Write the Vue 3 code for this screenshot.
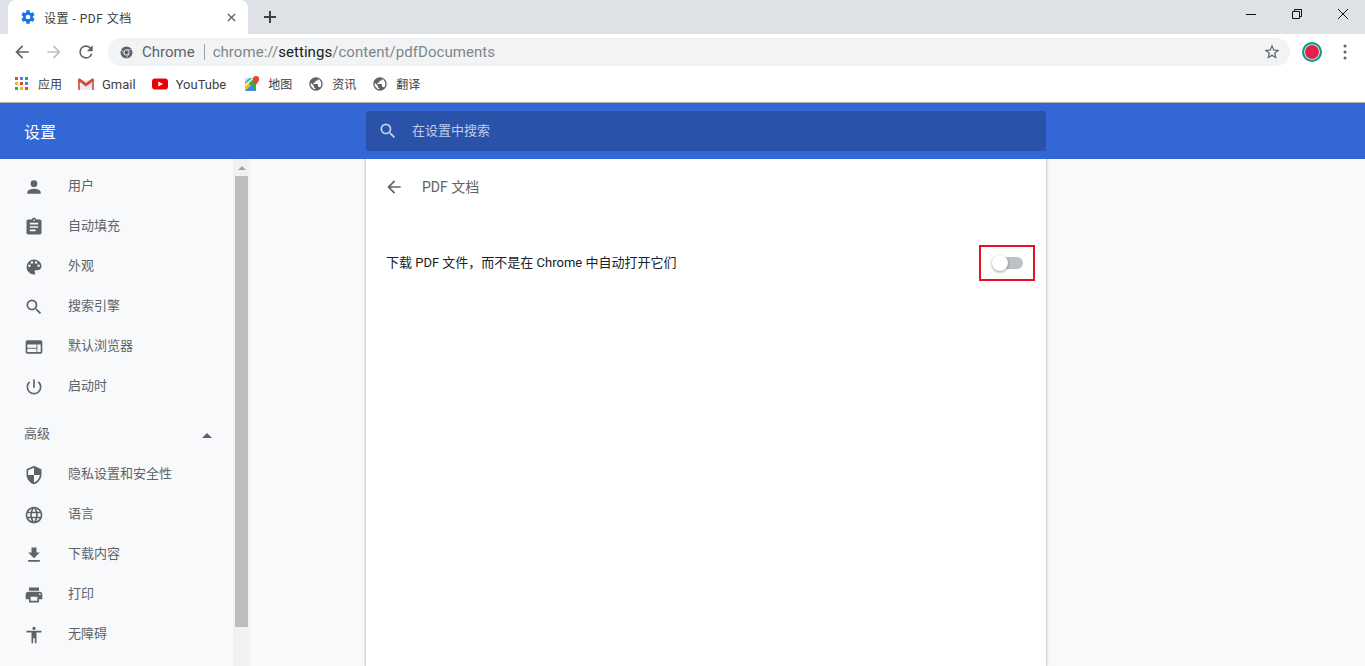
<script setup>
const searchPath = 'M15.5 14h-.79l-.28-.27A6.47 6.47 0 0 0 16 9.5 6.5 6.5 0 1 0 9.5 16c1.61 0 3.09-.59 4.23-1.57l.27.28v.79l5 4.99L20.49 19l-4.99-5zm-6 0C7.01 14 5 11.99 5 9.5S7.01 5 9.5 5 14 7.01 14 9.5 11.99 14 9.5 14z'

const bookmarks = [
  { id: 'apps', label: '应用' },
  { id: 'gmail', label: 'Gmail', latin: true },
  { id: 'youtube', label: 'YouTube', latin: true },
  { id: 'maps', label: '地图' },
  { id: 'globe', label: '资讯' },
  { id: 'globe', label: '翻译' }
]

const basicMenu = [
  { label: '用户', d: 'M12 12a4 4 0 1 0 0-8 4 4 0 0 0 0 8zm0 2c-2.67 0-8 1.34-8 4v2h16v-2c0-2.66-5.33-4-8-4z' },
  { label: '自动填充', d: 'M19 3h-4.18C14.4 1.84 13.3 1 12 1s-2.4.84-2.82 2H5a2 2 0 0 0-2 2v14c0 1.1.9 2 2 2h14a2 2 0 0 0 2-2V5a2 2 0 0 0-2-2zm-7 0a1 1 0 1 1 0 2 1 1 0 0 1 0-2zm2 14H7v-2h7v2zm3-4H7v-2h10v2zm0-4H7V7h10v2z' },
  { label: '外观', d: 'M12 3a9 9 0 0 0 0 18c.83 0 1.5-.67 1.5-1.5 0-.39-.15-.74-.39-1.01-.23-.26-.38-.61-.38-.99 0-.83.67-1.5 1.5-1.5H16c2.76 0 5-2.24 5-5 0-4.42-4.03-8-9-8zm-5.5 9a1.5 1.5 0 1 1 0-3 1.5 1.5 0 0 1 0 3zm3-4a1.5 1.5 0 1 1 0-3 1.5 1.5 0 0 1 0 3zm5 0a1.5 1.5 0 1 1 0-3 1.5 1.5 0 0 1 0 3zm3 4a1.5 1.5 0 1 1 0-3 1.5 1.5 0 0 1 0 3z' },
  { label: '搜索引擎', d: searchPath },
  { label: '默认浏览器', d: 'M20 4H4a2 2 0 0 0-2 2v12c0 1.1.9 2 2 2h16a2 2 0 0 0 2-2V6a2 2 0 0 0-2-2zm-5 14H4v-4h11v4zm0-5H4V9h11v4zm5 5h-4V9h4v9z' },
  { label: '启动时', d: 'M13 3h-2v10h2V3zm4.83 2.17l-1.42 1.42A6.92 6.92 0 0 1 19 12a7 7 0 1 1-11.42-5.41L6.17 5.17A8.93 8.93 0 0 0 3 12a9 9 0 0 0 18 0c0-2.74-1.23-5.18-3.17-6.83z' }
]

const advancedMenu = [
  { label: '隐私设置和安全性', d: 'M12 1L3 5v6c0 5.55 3.84 10.74 9 12 5.16-1.26 9-6.45 9-12V5l-9-4zm0 10.99h7c-.53 4.12-3.28 7.79-7 8.94V12H5V6.3l7-3.11v8.8z' },
  { label: '语言', d: 'M11.99 2C6.47 2 2 6.48 2 12s4.47 10 9.99 10C17.52 22 22 17.52 22 12S17.52 2 11.99 2zm6.93 6h-2.95a15.65 15.65 0 0 0-1.38-3.56A8.03 8.03 0 0 1 18.92 8zM12 4.04c.83 1.2 1.48 2.53 1.91 3.96h-3.82c.43-1.43 1.08-2.76 1.91-3.96zM4.26 14C4.1 13.36 4 12.69 4 12s.1-1.36.26-2h3.38c-.08.66-.14 1.32-.14 2 0 .68.06 1.34.14 2H4.26zm.82 2h2.95c.32 1.25.78 2.45 1.38 3.56A7.987 7.987 0 0 1 5.08 16zm2.95-8H5.08a7.987 7.987 0 0 1 4.33-3.56A15.65 15.65 0 0 0 8.03 8zM12 19.96c-.83-1.2-1.48-2.53-1.91-3.96h3.82c-.43 1.43-1.08 2.76-1.91 3.96zM14.34 14H9.66c-.09-.66-.16-1.32-.16-2 0-.68.07-1.35.16-2h4.68c.09.65.16 1.32.16 2 0 .68-.07 1.34-.16 2zm.25 5.56c.6-1.11 1.06-2.31 1.38-3.56h2.95a8.03 8.03 0 0 1-4.33 3.56zM16.36 14c.08-.66.14-1.32.14-2 0-.68-.06-1.34-.14-2h3.38c.16.64.26 1.31.26 2s-.1 1.36-.26 2h-3.38z' },
  { label: '下载内容', d: 'M19 9h-4V3H9v6H5l7 7 7-7zM5 18v2h14v-2H5z' },
  { label: '打印', d: 'M19 8H5c-1.66 0-3 1.34-3 3v6h4v4h12v-4h4v-6c0-1.66-1.34-3-3-3zm-3 11H8v-5h8v5zm3-7a1 1 0 1 1 0-2 1 1 0 0 1 0 2zm-1-9H6v4h12V3z' },
  { label: '无障碍', d: 'M12 2a2 2 0 1 1 0 4 2 2 0 0 1 0-4zm9 7h-6v13h-2v-6h-2v6H9V9H3V7h18v2z' }
]

// the little seeds on the watermelon avatar
const seeds = [[10, 5.5], [13.2, 6.8], [14.5, 10], [13.2, 13.2], [10, 14.5], [6.8, 13.2], [5.5, 10], [6.8, 6.8]]
</script>

<template>
  <div class="page">
    <div class="tabstrip">
      <div class="tab">
        <svg class="tab-gear" viewBox="0 0 24 24"><path d="M19.43 12.98c.04-.32.07-.64.07-.98s-.03-.66-.07-.98l2.11-1.65c.19-.15.24-.42.12-.64l-2-3.46c-.12-.22-.39-.3-.61-.22l-2.49 1c-.52-.4-1.08-.73-1.69-.98l-.38-2.65A.49.49 0 0 0 14 2h-4c-.25 0-.46.18-.49.42l-.38 2.65c-.61.25-1.17.59-1.69.98l-2.49-1c-.23-.09-.49 0-.61.22l-2 3.46c-.13.22-.07.49.12.64l2.11 1.65c-.04.32-.07.65-.07.98s.03.66.07.98l-2.11 1.65c-.19.15-.24.42-.12.64l2 3.46c.12.22.39.3.61.22l2.49-1c.52.4 1.08.73 1.69.98l.38 2.65c.03.24.24.42.49.42h4c.25 0 .46-.18.49-.42l.38-2.65c.61-.25 1.17-.59 1.69-.98l2.49 1c.23.09.49 0 .61-.22l2-3.46c.12-.22.07-.49-.12-.64l-2.11-1.65zM12 15.5a3.5 3.5 0 1 1 0-7 3.5 3.5 0 0 1 0 7z" fill="#1a73e8" /></svg>
        <span class="tab-title">设置 - PDF 文档</span>
        <svg class="tab-close" viewBox="0 0 10 10"><path d="M1 1l8 8M9 1l-8 8" stroke="#5f6368" stroke-width="1.5" /></svg>
      </div>
      <svg class="new-tab" viewBox="0 0 12 12"><path d="M6 0v12M0 6h12" stroke="#3c4043" stroke-width="2" /></svg>
      <div class="win-controls">
        <svg viewBox="0 0 12 12"><path d="M1 6.5h10" stroke="#111" stroke-width="1" /></svg>
        <svg viewBox="0 0 12 12" fill="none" stroke="#111"><path d="M1.5 3.5h7v7h-7zM3.5 3.5v-2h7v7h-2" /></svg>
        <svg viewBox="0 0 12 12"><path d="M1 1l10 10M11 1L1 11" stroke="#111" stroke-width="1" /></svg>
      </div>
    </div>

    <div class="toolbar">
      <svg class="nav" viewBox="0 0 24 24"><path d="M20 11H7.83l5.59-5.59L12 4l-8 8 8 8 1.41-1.41L7.83 13H20z" fill="#5f6368" /></svg>
      <svg class="nav" viewBox="0 0 24 24"><path d="M4 11h12.17l-5.59-5.59L12 4l8 8-8 8-1.41-1.41L16.17 13H4z" fill="#bdc1c6" /></svg>
      <svg class="nav" viewBox="0 0 24 24"><path d="M17.65 6.35A7.958 7.958 0 0 0 12 4a8 8 0 1 0 7.73 10h-2.08A6 6 0 1 1 12 6c1.66 0 3.14.69 4.22 1.78L13 11h7V4l-2.35 2.35z" fill="#5f6368" /></svg>
      <div class="omnibox">
        <svg class="chrome-ico" viewBox="0 0 24 24"><circle cx="12" cy="12" r="11" fill="#5f6368" /><circle cx="12" cy="12" r="5.5" fill="#f1f3f4" /><circle cx="12" cy="12" r="4" fill="#5f6368" /><path d="M12 6.7h10.5M7.4 14.7L2.2 5.6M16.6 14.7L11.4 23.5" stroke="#f1f3f4" stroke-width="1" /></svg>
        <span class="chip">Chrome</span>
        <span class="sep"></span>
        <span class="url">chrome://<b>settings</b>/content/pdfDocuments</span>
        <svg class="star" viewBox="0 0 24 24"><path d="M22 9.24l-7.19-.62L12 2 9.19 8.63 2 9.24l5.46 4.73L5.82 21 12 17.27 18.18 21l-1.63-7.03L22 9.24zM12 15.4l-3.76 2.27 1-4.28-3.32-2.88 4.38-.38L12 6.1l1.71 4.04 4.38.38-3.32 2.88 1 4.28L12 15.4z" fill="#5f6368" /></svg>
      </div>
      <svg class="avatar" viewBox="0 0 20 20">
        <circle cx="10" cy="10" r="10" fill="#0c9a80" />
        <circle cx="10" cy="10" r="7.8" fill="#f3f6e8" />
        <circle cx="10" cy="10" r="7" fill="#e8204f" />
        <circle v-for="(s, i) in seeds" :key="i" :cx="s[0]" :cy="s[1]" r=".6" fill="#a81237" />
      </svg>
      <svg class="menu-dots" viewBox="0 0 4 16"><circle cx="2" cy="2" r="1.5" fill="#5f6368" /><circle cx="2" cy="8" r="1.5" fill="#5f6368" /><circle cx="2" cy="14" r="1.5" fill="#5f6368" /></svg>
    </div>

    <div class="bookmarks">
      <div v-for="b in bookmarks" :key="b.label" class="bookmark">
        <svg v-if="b.id === 'apps'" viewBox="0 0 14 14" class="bm-ico apps">
          <rect x="0" y="0" width="3" height="3" fill="#ea4335" /><rect x="5" y="0" width="3" height="3" fill="#4285f4" /><rect x="10" y="0" width="3" height="3" fill="#34a853" />
          <rect x="0" y="5" width="3" height="3" fill="#fbbc05" /><rect x="5" y="5" width="3" height="3" fill="#ea4335" /><rect x="10" y="5" width="3" height="3" fill="#4285f4" />
          <rect x="0" y="10" width="3" height="3" fill="#34a853" /><rect x="5" y="10" width="3" height="3" fill="#fbbc05" /><rect x="10" y="10" width="3" height="3" fill="#ea4335" />
        </svg>
        <svg v-else-if="b.id === 'gmail'" viewBox="0 0 16 12" class="bm-ico">
          <path d="M2 2h12v10H2z" fill="#ececec" />
          <path d="M0 1.5V12h2V3.5zM16 1.5V12h-2V3.5z" fill="#d8675e" />
          <path d="M.5.5H2L8 5l6-4.500h1.500L16 2.500l-8 6-8-6z" fill="#d9433a" />
        </svg>
        <svg v-else-if="b.id === 'youtube'" viewBox="0 0 16 11" class="bm-ico">
          <rect width="16" height="11" rx="3" fill="#ee0000" /><path d="M6.3 3v5L11 5.5z" fill="#fff" />
        </svg>
        <svg v-else-if="b.id === 'maps'" viewBox="0 0 16 16" class="bm-ico">
          <path d="M1 2h11v13H1z" fill="#34a853" />
          <path d="M1 15l5.5-5.500L12 15z" fill="#4285f4" />
          <path d="M1 15V9.500l3-3 3 3z" fill="#fbbc05" />
          <path d="M1 8L8 2h2.500L1 11z" fill="#e8eaed" />
          <path d="M1 2h5L1 6.500z" fill="#c6dafc" />
          <path d="M12 0a3.200 3.200 0 0 1 3.200 3.200C15.200 5.400 12 8.500 12 8.500S8.800 5.400 8.800 3.200A3.200 3.200 0 0 1 12 0z" fill="#ea4335" />
        </svg>
        <svg v-else viewBox="0 0 24 24" class="bm-ico"><path d="M12 2C6.48 2 2 6.48 2 12s4.48 10 10 10 10-4.48 10-10S17.52 2 12 2zm-1 17.93c-3.95-.49-7-3.85-7-7.93 0-.62.08-1.21.21-1.79L9 15v1c0 1.1.9 2 2 2v1.93zm6.9-2.54c-.26-.81-1-1.39-1.9-1.39h-1v-3c0-.55-.45-1-1-1H8v-2h2c.55 0 1-.45 1-1V7h2c1.1 0 2-.9 2-2v-.41c2.93 1.19 5 4.06 5 7.41 0 2.08-.8 3.97-2.1 5.39z" fill="#5f6368" /></svg>
        <span :class="{ latin: b.latin }">{{ b.label }}</span>
      </div>
    </div>

    <header class="settings-bar">
      <div class="settings-title">设置</div>
      <div class="search">
        <svg viewBox="0 0 24 24"><path :d="searchPath" fill="#c4d2ee" /></svg>
        <span>在设置中搜索</span>
      </div>
    </header>

    <div class="body">
      <aside class="sidebar">
        <nav class="menu">
          <div v-for="m in basicMenu" :key="m.label" class="menu-item">
            <svg viewBox="0 0 24 24"><path :d="m.d" fill="#5f6368" /></svg>
            <span>{{ m.label }}</span>
          </div>
          <div class="adv-head">
            <span>高级</span>
            <i class="adv-arrow"></i>
          </div>
          <div v-for="m in advancedMenu" :key="m.label" class="menu-item">
            <svg viewBox="0 0 24 24"><path :d="m.d" fill="#5f6368" /></svg>
            <span>{{ m.label }}</span>
          </div>
        </nav>
        <div class="scrollbar">
          <i class="scroll-up"></i>
          <div class="thumb"></div>
        </div>
      </aside>

      <main class="content">
        <section class="card">
          <div class="card-head">
            <svg viewBox="0 0 24 24"><path d="M20 11H7.83l5.59-5.59L12 4l-8 8 8 8 1.41-1.41L7.83 13H20z" fill="#5f6368" /></svg>
            <span>PDF 文档</span>
          </div>
          <div class="setting-row">
            <span>下载 PDF 文件，而不是在 Chrome 中自动打开它们</span>
            <div class="highlight">
              <div class="toggle"><div class="knob"></div></div>
            </div>
          </div>
        </section>
      </main>
    </div>
  </div>
</template>

<style>
html, body { margin: 0; overflow: hidden; }
</style>

<style scoped>
.page {
  width: 1365px;
  height: 666px;
  display: flex;
  flex-direction: column;
  overflow: hidden;
  font-family: Roboto, "Noto Sans CJK SC", sans-serif;
  font-size: 13px;
  color: #5f6368;
  background: #f8f9fa;
}
svg { display: block; flex: none; }

.tabstrip {
  height: 34px;
  flex: none;
  background: #dee1e6;
  display: flex;
  align-items: flex-end;
  padding-left: 8px;
}
.tab {
  width: 240px;
  height: 34px;
  background: #fff;
  border-radius: 8px 8px 0 0;
  display: flex;
  align-items: center;
  padding: 0 12px;
  box-sizing: border-box;
}
.tab-gear { width: 16px; height: 16px; }
.tab-title { margin-left: 8px; flex: 1; font-size: 12px; color: #3c4043; letter-spacing: .5px; }
.tab-close { width: 9px; height: 9px; }
.new-tab { width: 12px; height: 12px; margin: 0 0 11px 16px; }
.win-controls {
  margin-left: auto;
  height: 34px;
  display: flex;
  align-items: center;
  gap: 34px;
  padding-right: 16px;
}
.win-controls svg { width: 12px; height: 12px; margin-top: -6px; }

.toolbar {
  height: 34px;
  flex: none;
  background: #fff;
  display: flex;
  align-items: center;
  padding: 2px 0 0 12px;
  box-sizing: border-box;
}
.nav { width: 20px; height: 20px; margin-right: 12px; }
.omnibox {
  width: 1182px;
  height: 28px;
  border-radius: 14px;
  background: #f1f3f4;
  display: flex;
  align-items: center;
  padding-left: 12px;
  box-sizing: border-box;
  font-size: 15px;
}
.chrome-ico { width: 13px; height: 13px; }
.chip { margin-left: 9px; color: #5f6368; }
.sep { width: 1px; height: 16px; background: #9aa0a6; margin: 0 8px 0 9px; }
.url { color: #80868b; letter-spacing: .05px; }
.url b { font-weight: 400; color: #202124; }
.star { width: 18px; height: 18px; margin-left: auto; margin-right: 9px; }
.avatar { width: 20px; height: 20px; margin-left: 12px; }
.menu-dots { width: 4px; height: 16px; margin-left: 21px; }

.bookmarks {
  height: 32px;
  padding: 0 0 2px 15px;
  flex: none;
  background: #fff;
  border-bottom: 1px solid #b0b0b0;
  display: flex;
  align-items: center;
  box-sizing: content-box;
  font-size: 12px;
  color: #3c4043;
}
.bookmark { display: flex; align-items: center; gap: 8px; margin-right: 16px; }
.bookmark:nth-child(3) { margin-right: 18px; }
.bookmark span { padding-bottom: 2px; }
.bm-ico { width: 16px; height: 16px; }
.bm-ico.apps { width: 14px; height: 14px; margin-right: 1px; }
.bookmark .latin { font-size: 13px; padding-bottom: 0; }

.settings-bar {
  height: 56px;
  flex: none;
  background: #3367d6;
  display: flex;
  align-items: center;
  color: #fff;
  position: relative;
  z-index: 2;
}
.settings-title { width: 366px; padding-left: 24px; box-sizing: border-box; font-size: 16px; }
.search {
  width: 680px;
  height: 40px;
  background: #2a52a9;
  border-radius: 2px;
  display: flex;
  align-items: center;
  padding-left: 12px;
  box-sizing: border-box;
  color: #bfcde9;
}
.search svg { width: 20px; height: 20px; margin-right: 14px; }
.search span { padding-bottom: 4px; }

.body { flex: 1; display: flex; min-height: 0; }
.sidebar { width: 250px; flex: none; display: flex; }
.menu { width: 233px; padding-top: 8px; box-sizing: border-box; }
.menu-item {
  height: 40px;
  display: flex;
  align-items: center;
  padding-left: 24px;
  gap: 24px;
}
.menu-item svg { width: 20px; height: 20px; }
.menu-item span, .adv-head span { padding-bottom: 6px; }
.adv-head {
  height: 40px;
  padding: 8px 21px 0 24px;
  display: flex;
  align-items: center;
  justify-content: space-between;
}
.adv-arrow {
  width: 0;
  height: 0;
  border: 5px solid transparent;
  border-top: 0;
  border-bottom-color: #5f6368;
}
.scrollbar {
  width: 17px;
  background: #f1f1f1;
  display: flex;
  flex-direction: column;
  align-items: center;
}
.scroll-up {
  width: 0;
  height: 0;
  margin: 7px 0 4px;
  border: 4px solid transparent;
  border-top: 0;
  border-bottom-color: #a3a3a3;
}
.thumb { width: 13px; height: 451px; margin-top: 2px; background: #bdbdbd; }

.content { flex: 1; padding-left: 116px; }
.card {
  width: 680px;
  height: 100%;
  background: #fff;
  box-shadow: 0 0 2px 1px rgba(60, 64, 67, .28);
}
.card-head {
  height: 56px;
  display: flex;
  align-items: center;
  padding-left: 18px;
  gap: 18px;
  font-size: 14px;
}
.card-head svg { width: 20px; height: 20px; }
.card-head span { padding-bottom: 2px; }
.setting-row {
  margin-top: 30px;
  height: 36px;
  display: flex;
  align-items: center;
  justify-content: space-between;
  padding: 0 11px 0 20px;
  color: #202124;
}
.setting-row > span { padding-bottom: 3px; }
.highlight {
  width: 56px;
  height: 36px;
  box-sizing: border-box;
  border: 2px solid #e81123;
  display: flex;
  align-items: center;
  justify-content: center;
}
.toggle {
  width: 27px;
  height: 12px;
  margin-left: 5px;
  border-radius: 6px;
  background: #bdc1c6;
  position: relative;
}
.knob {
  position: absolute;
  left: -4px;
  top: -2px;
  width: 16px;
  height: 16px;
  border-radius: 50%;
  background: #fff;
  box-shadow: 0 1px 3px rgba(0, 0, 0, .4);
}
</style>
